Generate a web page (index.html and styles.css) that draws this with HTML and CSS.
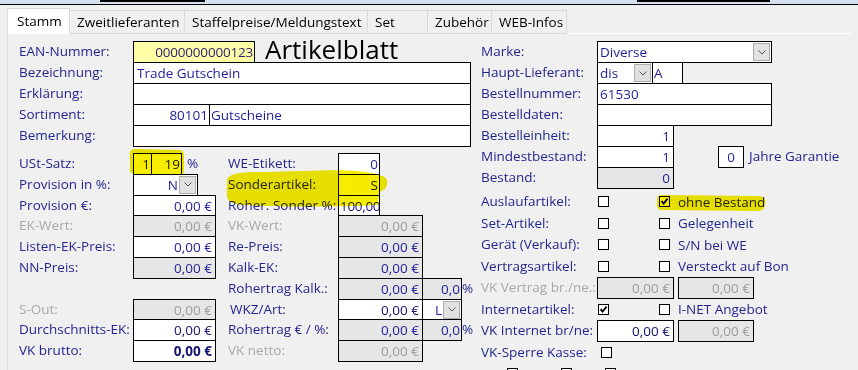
FILE: index.html
```html
<!DOCTYPE html>
<html lang="de">
<head>
	<meta charset="UTF-8">
	<title>Artikelblatt</title>
	<link rel="stylesheet" href="styles.css">
</head>
<body>
	<div class="titlebar"><i class="mark mark-a"></i><i class="mark mark-b"></i></div>

	<div class="tabs">
		<div class="tab active">Stamm</div>
		<div class="tab">Zweitlieferanten</div>
		<div class="tab">Staffelpreise/Meldungstext</div>
		<div class="tab">Set</div>
		<div class="tab">Zubehör</div>
		<div class="tab">WEB-Infos</div>
		<div class="tab-rest"></div>
	</div>

	<div class="panel">
		<div class="left">
			<div class="head">
				<div class="row"><span class="lbl">EAN-Nummer:</span><div class="box num ean">0000000000123</div><h1>Artikelblatt</h1></div>
				<div class="row"><span class="lbl">Bezeichnung:</span><div class="box wide">Trade Gutschein</div></div>
				<div class="row"><span class="lbl">Erklärung:</span><div class="box wide"></div></div>
				<div class="row"><span class="lbl">Sortiment:</span><div class="box num sort-nr">80101</div><div class="box join sort-name">Gutscheine</div></div>
				<div class="row"><span class="lbl">Bemerkung:</span><div class="box wide"></div></div>
			</div>

			<div class="lower">
				<div class="col">
					<div class="row"><span class="lbl">USt-Satz:</span><div class="box num ust-a">1</div><div class="box num join ust-b">19</div><span class="pct">%</span></div>
					<div class="row"><span class="lbl">Provision in %:</span>
						<div class="combo prov"><span class="val num">N</span><span class="btn"><svg width="8" height="5" viewBox="0 0 8 5"><path d="M.5 .5L4 4L7.5 .5" fill="none" stroke="#555" stroke-width="1"/></svg></span></div></div>
					<div class="row"><span class="lbl">Provision €:</span><div class="box num money">0,00 €</div></div>
					<div class="row"><span class="lbl off">EK-Wert:</span><div class="box num money off">0,00 €</div></div>
					<div class="row"><span class="lbl">Listen-EK-Preis:</span><div class="box num money">0,00 €</div></div>
					<div class="row"><span class="lbl">NN-Preis:</span><div class="box num money lock">0,00 €</div></div>
					<div class="row"></div>
					<div class="row"><span class="lbl off">S-Out:</span><div class="box num money off">0,00 €</div></div>
					<div class="row"><span class="lbl">Durchschnitts-EK:</span><div class="box num money dark">0,00 €</div></div>
					<div class="row"><span class="lbl">VK brutto:</span><div class="box num money bold">0,00 €</div></div>
				</div>

				<div class="col col-b">
					<div class="row"><span class="lbl">WE-Etikett:</span><div class="box num short">0</div></div>
					<div class="row"><span class="lbl">Sonderartikel:</span><div class="box num short">S</div></div>
					<div class="row"><span class="lbl">Roher. Sonder %:</span><div class="box num short tight">100,00</div></div>
					<div class="row"><span class="lbl off">VK-Wert:</span><div class="box num mid off">0,00 €</div></div>
					<div class="row"><span class="lbl">Re-Preis:</span><div class="box num mid lock">0,00 €</div></div>
					<div class="row"><span class="lbl">Kalk-EK:</span><div class="box num mid lock">0,00 €</div></div>
					<div class="row"><span class="lbl">Rohertrag Kalk.:</span><div class="box num mid lock">0,00 €</div><div class="box num join rate lock">0,0</div><span class="pct-r">%</span></div>
					<div class="row"><span class="lbl ind">WKZ/Art:</span><div class="box num mid dark">0,00 €</div>
						<div class="combo join rate"><span class="val num">L</span><span class="btn"><svg width="8" height="5" viewBox="0 0 8 5"><path d="M.5 .5L4 4L7.5 .5" fill="none" stroke="#555" stroke-width="1"/></svg></span></div></div>
					<div class="row"><span class="lbl">Rohertrag € / %:</span><div class="box num mid lock">0,00 €</div><div class="box num join rate lock">0,0</div><span class="pct-r">%</span></div>
					<div class="row"><span class="lbl off">VK netto:</span><div class="box num mid off">0,00 €</div></div>
				</div>
			</div>
		</div>

		<div class="right">
			<div class="row"><span class="lbl">Marke:</span>
				<div class="combo marke"><span class="val">Diverse</span><span class="btn"><svg width="8" height="5" viewBox="0 0 8 5"><path d="M.5 .5L4 4L7.5 .5" fill="none" stroke="#555" stroke-width="1"/></svg></span></div></div>
			<div class="row"><span class="lbl">Haupt-Lieferant:</span>
				<div class="combo lief"><span class="val">dis</span><span class="btn"><svg width="8" height="5" viewBox="0 0 8 5"><path d="M.5 .5L4 4L7.5 .5" fill="none" stroke="#555" stroke-width="1"/></svg></span></div>
				<div class="box join lief-kz">A</div></div>
			<div class="row"><span class="lbl">Bestellnummer:</span><div class="box marke">61530</div></div>
			<div class="row"><span class="lbl">Bestelldaten:</span><div class="box marke"></div></div>
			<div class="row"><span class="lbl">Bestelleinheit:</span><div class="box num qty">1</div></div>
			<div class="row"><span class="lbl">Mindestbestand:</span><div class="box num qty">1</div><div class="box gar">0</div><span class="gar-txt">Jahre Garantie</span></div>
			<div class="row"><span class="lbl">Bestand:</span><div class="box num qty lock">0</div></div>

			<div class="checks">
				<div class="row"><span class="lbl">Auslaufartikel:</span><span class="cb"></span><span class="cb second"><svg width="9" height="9" viewBox="0 0 9 9"><path d="M1.5 4.2L3.6 6.6L7.6 1.6" fill="none" stroke="#000" stroke-width="1.8"/></svg></span><span class="cb-txt">ohne Bestand</span></div>
				<div class="row"><span class="lbl">Set-Artikel:</span><span class="cb"></span><span class="cb second"></span><span class="cb-txt">Gelegenheit</span></div>
				<div class="row"><span class="lbl">Gerät (Verkauf):</span><span class="cb"></span><span class="cb second"></span><span class="cb-txt">S/N bei WE</span></div>
				<div class="row"><span class="lbl">Vertragsartikel:</span><span class="cb"></span><span class="cb second"></span><span class="cb-txt">Versteckt auf Bon</span></div>
				<div class="row"><span class="lbl off">VK Vertrag br./ne.:</span><div class="box num qty off">0,00 €</div><div class="box num pair off">0,00 €</div></div>
				<div class="row"><span class="lbl">Internetartikel:</span><span class="cb"><svg width="9" height="9" viewBox="0 0 9 9"><path d="M1.5 4.2L3.6 6.6L7.6 1.6" fill="none" stroke="#000" stroke-width="1.8"/></svg></span><span class="cb second"></span><span class="cb-txt">I-NET Angebot</span></div>
				<div class="row"><span class="lbl">VK Internet br/ne:</span><div class="box num qty dark">0,00 €</div><div class="box num pair off">0,00 €</div></div>
				<div class="row"><span class="lbl">VK-Sperre Kasse:</span><span class="cb sperre"></span></div>
				<div class="row fkeys"><span class="fk">F1</span><span class="cb"></span><span class="fk f2">F2</span><span class="cb"></span><span class="fk f3">F3</span><span class="cb"></span></div>
			</div>
		</div>
	</div>

	<!-- highlighter marks painted on top of the screenshot -->
	<svg class="marker" width="858" height="370" viewBox="0 0 858 370">
		<path d="M130 153Q130 149 135 149L179 150Q184 150 184 155L184 171Q184 175 179 175L135 174Q130 174 130 170Z"/>
		<path d="M227 180C228 173 245 172 265 172L340 170C360 171 385 173 387 180C388 186 386 190 379 192L378 205C340 207 280 207 245 205C230 204 226 200 227 193Z"/>
		<path d="M657 199Q657 195 662 195L760 196Q766 197 765 203Q765 211 758 211L662 210Q657 210 657 206Z"/>
	</svg>
</body>
</html>
```

FILE: styles.css
```css
*{
	margin: 0;
	padding: 0;
	box-sizing: border-box;
}
body{
	width: 858px;
	height: 370px;
	overflow: hidden;
	position: relative;
	background: #f0f0f0;
	font: 13.5px "Open Sans", "Noto Sans", sans-serif;
	color: #25258e;
}

/* window edge */
.titlebar{
	display: flex;
	height: 5px;
	background: #d5e1f1;
	border-bottom: 1px solid #000;
}
.mark{
	height: 2px;
	background: #000;
}
.mark-a{
	margin-left: 100px;
	width: 105px;
}
.mark-b{
	margin-left: 432px;
	width: 133px;
}

/* tabs */
.tabs{
	display: grid;
	grid-template-columns: 63px 115px 183px 60px 64px 75px 1fr;
	height: 29px;
	padding: 3px 7px 0 7px;
	color: #000;
}
.tab{
	margin-top: 2px;
	padding-left: 7px;
	line-height: 22px;
	white-space: nowrap;
	background: #f0f0f0;
	border: 1px solid #d9d9d9;
	border-left: 0;
}
.tab.active{
	margin-top: 0;
	padding-left: 9px;
	line-height: 25px;
	background: #fff;
	border: 1px solid #d9d9d9;
	border-bottom: 0;
}
.tab-rest{
	border-bottom: 1px solid #fff;
}

/* form body */
.panel{
	display: flex;
	gap: 10px;
	height: 336px;
	margin-left: 7px;
	padding: 7px 0 0 11px;
	border-left: 1px solid #dcdcdc;
}
.left{
	width: 452px;
	flex: none;
}
.right{
	flex: 1;
}
.row{
	display: flex;
	align-items: flex-start;
	height: 21px;
	white-space: nowrap;
}
.lbl{
	flex: none;
	width: 114px;
	line-height: 20px;
}
.lbl.off{
	color: #a8a8a8;
}
.lbl.ind{
	padding-left: 2px;
}

.box{
	flex: none;
	height: 22px;
	padding: 0 3px;
	line-height: 20px;
	overflow: hidden;
	white-space: nowrap;
	color: #1e1e9a;
	background: #fff;
	border: 1px solid #000;
}
.num{
	text-align: right;
}
.join{
	margin-left: -1px;
}
.box.lock{
	background: #e6e6e6;
}
.box.off{
	background: #e6e6e6;
	color: #9d9d9d;
}
.box.dark{
	color: #121270;
}
.box.bold{
	color: #121270;
	font-weight: bold;
}

.ean{
	width: 122px;
	background: #ffffa6;
	color: #2c1d78;
	padding-right: 1px;
	letter-spacing: -0.2px;
}
h1{
	margin: -4px 0 0 10px;
	font-size: 26px;
	font-weight: normal;
	line-height: 24px;
	color: #000;
}
.wide{
	width: 338px;
}
.sort-nr{
	width: 77px;
	padding-right: 1px;
}
.sort-name{
	width: 262px;
	padding-left: 1px;
}

/* lower two columns */
.lower{
	display: grid;
	grid-template-columns: 197px 1fr;
	column-gap: 12px;
	margin-top: 7px;
}
.lower .row{
	height: 20.8px;
}
.col-b .lbl{
	width: 110px;
}
.ust-a{
	width: 19px;
	padding: 0 1px;
}
.ust-b{
	width: 31px;
	padding: 0 1px;
}
.pct{
	margin-left: 5px;
	line-height: 20px;
}
.pct-r{
	margin-left: 0;
	line-height: 20px;
}
.money{
	width: 83px;
}
.short{
	width: 42px;
	padding: 0 1px;
}
.tight{
	letter-spacing: -0.3px;
}
.mid{
	width: 85px;
}
.rate{
	width: 40px;
	padding-right: 1px;
}

/* combo boxes */
.combo{
	flex: none;
	display: flex;
	height: 22px;
	background: #fff;
	border: 1px solid #000;
	color: #1e1e9a;
}
.combo .val{
	flex: 1;
	padding: 0 2px;
	line-height: 20px;
	overflow: hidden;
}
.combo .val.num{
	padding-right: 1px;
}
.btn{
	flex: none;
	display: flex;
	align-items: center;
	justify-content: center;
	width: 17px;
	margin: 1px 1px 1px 0;
	background: #e1e1e1;
	border: 1px solid #adadad;
}
.prov{
	width: 65px;
}
.combo.rate{
	padding: 0;
}
.marke{
	width: 175px;
}
.right .box.marke{
	padding-left: 2px;
}
.lief{
	width: 56px;
}
.lief-kz{
	width: 31px;
	padding-left: 1px;
}

/* right column */
.right .lbl{
	width: 116px;
}
.qty{
	width: 77px;
}
.gar{
	width: 26px;
	margin-left: 44px;
	text-align: center;
	padding: 0;
}
.gar-txt{
	margin-left: 5px;
	line-height: 20px;
}
.pair{
	width: 76px;
	margin-left: 4px;
}
.checks{
	margin-top: 3px;
}
.checks .row{
	height: 21.5px;
	align-items: center;
}
.checks .lbl{
	line-height: 21.5px;
}
.cb{
	flex: none;
	display: flex;
	width: 11px;
	height: 11px;
	margin-left: 1px;
	background: #fff;
	border: 1px solid #000;
}
.cb svg{
	display: block;
}
.cb.second{
	margin-left: 50px;
}
.cb.sperre{
	margin-left: 4px;
}
.cb-txt{
	margin-left: 8px;
}
.fk{
	width: 25px;
}
.fk.f2{
	width: 23px;
	margin-left: 19px;
}
.fk.f3{
	width: 23px;
	margin-left: 9px;
}

/* yellow highlighter */
.marker{
	position: absolute;
	left: 0;
	top: 0;
	pointer-events: none;
	mix-blend-mode: multiply;
	fill: #f5ec00;
}
```
